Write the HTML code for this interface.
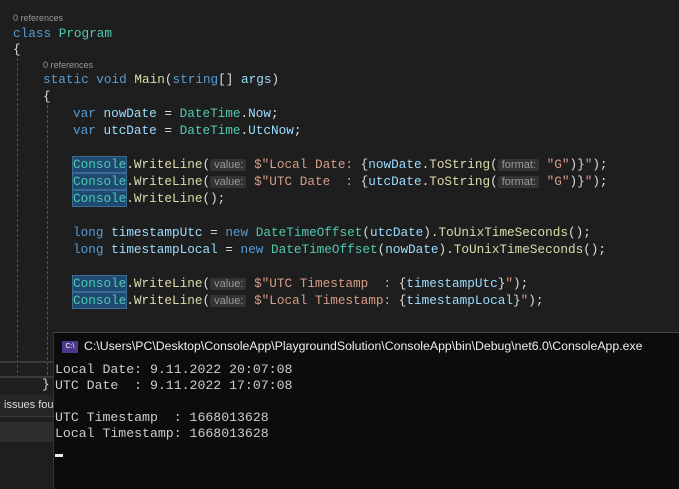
<!DOCTYPE html><html><head><style>
body{margin:0;width:679px;height:488px;background:#1e1e1e;overflow:hidden;position:relative;font-family:"Liberation Mono",monospace}
.l{position:absolute;white-space:pre;font-size:12.7px;line-height:17px;color:#dcdcdc}
.r{position:absolute;font-family:"Liberation Sans",sans-serif;font-size:9px;color:#999}
.k{color:#569cd6}.t{color:#4ec9b0}.m{color:#dcdcaa}.v{color:#9cdcfe}.s{color:#d69d85}
.c{color:#4ec9b0;background:#1f4a70;outline:1px solid #3b6b96}
.h{font-family:"Liberation Sans",sans-serif;font-size:11px;color:#999;background:#333;border-radius:2px;padding:0 3px 0 4px}
.g{position:absolute;width:0;border-left:1px dashed #555}
.cl{position:absolute;white-space:pre;font-size:13.2px;line-height:16px;color:#cccccc;left:55px}
</style></head><body>
<div class="g" style="left:17px;top:58px;height:320px"></div>
<div class="g" style="left:47px;top:105px;height:270px"></div>
<div class="r" style="left:13px;top:13px">0 references</div>
<div class="l" style="left:13px;top:25px"><span class="k">class</span> <span class="t">Program</span></div>
<div class="l" style="left:13px;top:41px">{</div>
<div class="r" style="left:43px;top:60px">0 references</div>
<div class="l" style="left:43px;top:71px"><span class="k">static void</span> <span class="m">Main</span>(<span class="k">string</span>[] <span class="v">args</span>)</div>
<div class="l" style="left:43px;top:88px">{</div>
<div class="l" style="left:73px;top:105px"><span class="k">var</span> <span class="v">nowDate</span> = <span class="t">DateTime</span>.<span class="v">Now</span>;</div>
<div class="l" style="left:73px;top:122px"><span class="k">var</span> <span class="v">utcDate</span> = <span class="t">DateTime</span>.<span class="v">UtcNow</span>;</div>
<div class="l" style="left:73px;top:156px"><span class="c">Console</span>.<span class="m">WriteLine</span>(<span class="h">value:</span> <span class="s">$"Local Date: </span>{<span class="v">nowDate</span>.<span class="m">ToString</span>(<span class="h">format:</span> <span class="s">"G"</span>)}<span class="s">"</span>);</div>
<div class="l" style="left:73px;top:173px"><span class="c">Console</span>.<span class="m">WriteLine</span>(<span class="h">value:</span> <span class="s">$"UTC Date  : </span>{<span class="v">utcDate</span>.<span class="m">ToString</span>(<span class="h">format:</span> <span class="s">"G"</span>)}<span class="s">"</span>);</div>
<div class="l" style="left:73px;top:190px"><span class="c">Console</span>.<span class="m">WriteLine</span>();</div>
<div class="l" style="left:73px;top:224px"><span class="k">long</span> <span class="v">timestampUtc</span> = <span class="k">new</span> <span class="t">DateTimeOffset</span>(<span class="v">utcDate</span>).<span class="m">ToUnixTimeSeconds</span>();</div>
<div class="l" style="left:73px;top:241px"><span class="k">long</span> <span class="v">timestampLocal</span> = <span class="k">new</span> <span class="t">DateTimeOffset</span>(<span class="v">nowDate</span>).<span class="m">ToUnixTimeSeconds</span>();</div>
<div class="l" style="left:73px;top:275px"><span class="c">Console</span>.<span class="m">WriteLine</span>(<span class="h">value:</span> <span class="s">$"UTC Timestamp  : </span>{<span class="v">timestampUtc</span>}<span class="s">"</span>);</div>
<div class="l" style="left:73px;top:292px"><span class="c">Console</span>.<span class="m">WriteLine</span>(<span class="h">value:</span> <span class="s">$"Local Timestamp: </span>{<span class="v">timestampLocal</span>}<span class="s">"</span>);</div>
<div style="position:absolute;left:0;top:361px;width:53px;height:2px;background:#3a3a3a"></div>
<div style="position:absolute;left:0;top:376px;width:53px;height:2px;background:#3a3a3a"></div>
<div class="l" style="left:42px;top:376px">}</div>
<div style="position:absolute;left:0;top:395px;width:53px;height:22px;background:#252526"></div>
<div style="position:absolute;left:0;top:416px;width:53px;height:1px;background:#3a3a3a"></div>
<div style="position:absolute;left:4px;top:399px;font-family:'Liberation Sans',sans-serif;font-size:11px;color:#ddd;white-space:nowrap">issues fou</div>
<div style="position:absolute;left:0;top:422px;width:53px;height:20px;background:#2d2d2d"></div>
<div style="position:absolute;left:53px;top:332px;width:626px;height:156px;background:#0c0c0c;border-top:1px solid #444;border-left:1px solid #333"></div>
<div style="position:absolute;left:62px;top:341px;width:16px;height:12px;background:#4b3a8c;color:#fff;font-size:7px;line-height:12px;text-align:center;font-family:'Liberation Sans',sans-serif">C:\</div>
<div style="position:absolute;left:84px;top:339px;font-family:'Liberation Sans',sans-serif;font-size:12.3px;color:#eee;white-space:nowrap">C:\Users\PC\Desktop\ConsoleApp\PlaygroundSolution\ConsoleApp\bin\Debug\net6.0\ConsoleApp.exe</div>
<div class="cl" style="top:362px">Local Date: 9.11.2022 20:07:08</div>
<div class="cl" style="top:378px">UTC Date  : 9.11.2022 17:07:08</div>
<div class="cl" style="top:410px">UTC Timestamp  : 1668013628</div>
<div class="cl" style="top:426px">Local Timestamp: 1668013628</div>
<div style="position:absolute;left:55px;top:454px;width:8px;height:3px;background:#eee"></div>
</body></html>
